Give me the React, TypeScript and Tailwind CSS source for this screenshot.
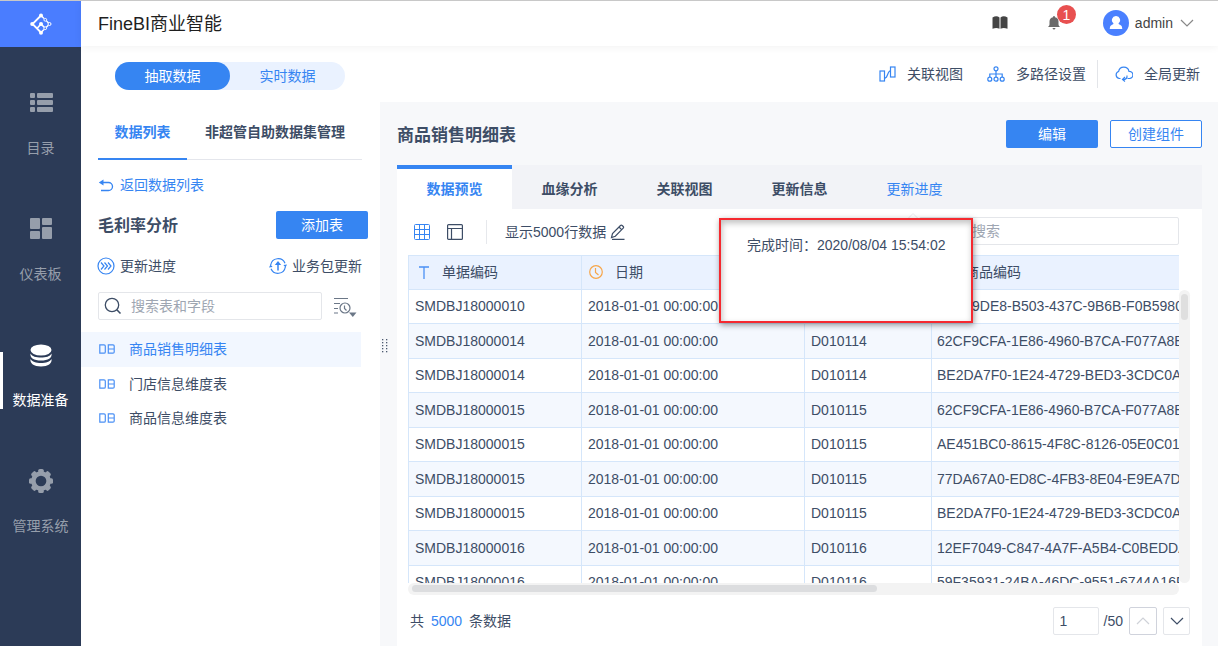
import React from 'react';

const rows: [string, string, string, string][] = [
  ['SMDBJ18000010', '2018-01-01 00:00:00', 'D010110', 'AE3F9DE8-B503-437C-9B6B-F0B5980A'],
  ['SMDBJ18000014', '2018-01-01 00:00:00', 'D010114', '62CF9CFA-1E86-4960-B7CA-F077A8B1'],
  ['SMDBJ18000014', '2018-01-01 00:00:00', 'D010114', 'BE2DA7F0-1E24-4729-BED3-3CDC0A2F'],
  ['SMDBJ18000015', '2018-01-01 00:00:00', 'D010115', '62CF9CFA-1E86-4960-B7CA-F077A8B1'],
  ['SMDBJ18000015', '2018-01-01 00:00:00', 'D010115', 'AE451BC0-8615-4F8C-8126-05E0C01D'],
  ['SMDBJ18000015', '2018-01-01 00:00:00', 'D010115', '77DA67A0-ED8C-4FB3-8E04-E9EA7DB1'],
  ['SMDBJ18000015', '2018-01-01 00:00:00', 'D010115', 'BE2DA7F0-1E24-4729-BED3-3CDC0A2F'],
  ['SMDBJ18000016', '2018-01-01 00:00:00', 'D010116', '12EF7049-C847-4A7F-A5B4-C0BEDDA1'],
  ['SMDBJ18000016', '2018-01-01 00:00:00', 'D010116', '59F35931-24BA-46DC-9551-6744A16F'],
];

type IconProps = { className?: string };

const Logo = () => (
  <svg width="22" height="22" viewBox="0 0 22 22" fill="none" stroke="#fff" strokeWidth="1.4">
    <path d="M11 2.5 2.5 11 11 19.5" strokeWidth="1.800" />
    <path d="M11 2.500 14 5.500M16.500 8 18.500 10M18.300 12.200 16.300 14.200M14 16.400 11 19.500" />
    <path d="M7 15.500 11 11l3.200 3.200" strokeWidth="1.600" />
    <circle cx="11" cy="2.500" r="2" fill="#fff" stroke="none" />
    <circle cx="2.200" cy="11" r="2" fill="#fff" stroke="none" />
    <circle cx="11" cy="19.800" r="2" fill="#fff" stroke="none" />
    <circle cx="11" cy="11" r="2" fill="#fff" stroke="none" />
    <circle cx="15.300" cy="6.800" r="1.400" strokeWidth="1" />
    <circle cx="19.500" cy="11" r="1.500" strokeWidth="1" />
    <circle cx="15.200" cy="15.200" r="1.400" strokeWidth="1" />
  </svg>
);

const ListIcon = () => (
  <svg width="24" height="24" viewBox="0 0 24 24" fill="currentColor">
    <rect x="1" y="2" width="5" height="5" rx="1" /><rect x="8" y="2" width="16" height="5" rx="1" />
    <rect x="1" y="9" width="5" height="5" rx="1" /><rect x="8" y="9" width="16" height="5" rx="1" />
    <rect x="1" y="16" width="5" height="5" rx="1" /><rect x="8" y="16" width="16" height="5" rx="1" />
  </svg>
);
const BoardIcon = () => (
  <svg width="24" height="24" viewBox="0 0 24 24" fill="currentColor">
    <rect x="1" y="1" width="10" height="11" rx="1" /><rect x="13" y="1" width="10" height="7" rx="1" />
    <rect x="1" y="14" width="10" height="8" rx="1" /><rect x="13" y="10" width="10" height="12" rx="1" />
  </svg>
);
const StackIcon = () => (
  <svg width="24" height="24" viewBox="0 0 24 24" fill="currentColor">
    <ellipse cx="12" cy="7" rx="10.500" ry="5.500" />
    <path d="M1.500 10.500c1.500 3 5.500 4 10.500 4s9-1 10.500-4c.8 4.500-3.500 7-10.500 7s-11.300-2.500-10.500-7z" />
    <path d="M1.500 16c1.500 2.800 5.500 4 10.500 4s9-1.200 10.500-4c.8 4.500-3.500 7.500-10.500 7.500S.7 20.500 1.500 16z" />
  </svg>
);
const GearIcon = () => (
  <svg width="24" height="24" viewBox="0 0 24 24">
    <circle cx="12" cy="12" r="7.600" fill="none" stroke="currentColor" strokeWidth="4.500" />
    <g fill="currentColor">
      {[0, 45, 90, 135, 180, 225, 270, 315].map((a) => (
        <rect key={a} x="9.200" y="0" width="5.600" height="5" rx="1.600" transform={`rotate(${a} 12 12)`} />
      ))}
    </g>
  </svg>
);
const BackIcon = () => (
  <svg width="16" height="14" viewBox="0 0 16 14" fill="none" stroke="currentColor" strokeWidth="1.300">
    <path d="M3 4.500h7.500a3.800 3.800 0 0 1 0 8H3" />
    <path d="M.8 4.500 5.500 1.500v6z" fill="currentColor" stroke="none" />
  </svg>
);
const ProgressIcon = () => (
  <svg width="18" height="18" viewBox="0 0 18 18" fill="none" stroke="currentColor" strokeWidth="1.200">
    <circle cx="9" cy="9" r="8" />
    <path d="m4 5.500 3 3.500-3 3.500M7.500 5.500l3 3.500-3 3.500M11 5.500 14 9l-3 3.500" />
  </svg>
);
const PackIcon = () => (
  <svg width="18" height="18" viewBox="0 0 18 18" fill="none" stroke="currentColor" strokeWidth="1.200">
    <path d="M1.700 8a7.500 7.500 0 0 1 14.300-1.800M16.300 10A7.500 7.500 0 0 1 2 11.800" />
    <path d="M9 13.500V6" strokeWidth="1.500" />
    <path d="M9 4 5.800 8h6.400zM0 10.500l3.600-.5L1.500 7.500zM18 7.500l-3.600.5 2.100 2.500z" fill="currentColor" stroke="none" />
  </svg>
);
const SearchIcon = () => (
  <svg width="18" height="18" viewBox="0 0 18 18" fill="none" stroke="currentColor" strokeWidth="1.300">
    <circle cx="8" cy="8" r="6.700" /><path d="m12.800 12.800 3.700 3.700" strokeWidth="1.600" />
  </svg>
);
const SortIcon = () => (
  <svg width="24" height="20" viewBox="0 0 24 20" fill="none" stroke="currentColor" strokeWidth="1.200">
    <path d="M0 1.500h14M0 6.500h6M0 11.500h4M0 16h4" />
    <circle cx="11" cy="11" r="5" /><path d="M10.500 8.500v3l2 2" />
    <path d="M15 15.500h7.500L18.800 20z" fill="currentColor" stroke="none" />
  </svg>
);
const DbIcon = () => (
  <svg width="16" height="10" viewBox="0 0 16 10" fill="none" stroke="#4a90f5" strokeWidth="1.200">
    <path d="M.8.800h4.200q1.300 0 1.300 1.300v5.800q0 1.300-1.300 1.300H.8zM9.300.800h4.700q1.200 0 1.200 1.200v6q0 1.200-1.200 1.200H9.300zM9.300 5h5.700" />
  </svg>
);
const BookIcon = () => (
  <svg width="16" height="14" viewBox="0 0 16 14" fill="#444">
    <path d="M.5 1.500Q4.500-.8 7.500 1.500v11.300q-3-1.800-7 0zM8.500 1.500q3-2.300 7 0v11.300q-4-1.800-7 0z" />
  </svg>
);
const BellIcon = () => (
  <svg width="12" height="14" viewBox="0 0 12 14" fill="#6a6a6a">
    <path d="M6 0q1 0 1 1.200Q10.500 2 10.500 5.500V8.500q0 1.300 1.500 2.500H0q1.500-1.200 1.500-2.500V5.500Q1.500 2 5 1.200 5 0 6 0zM4.500 12h3q-.3 1.500-1.500 1.500T4.500 12z" />
  </svg>
);
const Avatar = () => (
  <svg width="26" height="26" viewBox="0 0 26 26">
    <circle cx="13" cy="13" r="13" fill="#4a80ff" />
    <path d="M13 6a4 4 0 0 1 2.500 7.200q0 1 1.500 1.500 2.200.8 2.200 3.300v1H6.800v-1q0-2.500 2.200-3.300 1.500-.5 1.500-1.500A4 4 0 0 1 13 6z" fill="#fff" />
  </svg>
);
const Chevron = ({ className = '', up = false }: IconProps & { up?: boolean }) => (
  <svg width="14" height="8" viewBox="0 0 14 8" fill="none" stroke="currentColor" strokeWidth="1.200" className={className}>
    <path d={up ? 'M1 7l6-6 6 6' : 'M1 1l6 6 6-6'} />
  </svg>
);
const LinkIcon = () => (
  <svg width="17" height="16" viewBox="0 0 17 16" fill="none" stroke="currentColor" strokeWidth="1.200">
    <rect x="1" y="5" width="4.500" height="10" /><rect x="11.500" y="1" width="4.500" height="10" />
    <path d="M5.500 12.500 7.500 11l2.200-5 1.800-1.500" />
  </svg>
);
const TreeIcon = () => (
  <svg width="18" height="16" viewBox="0 0 18 16" fill="none" stroke="currentColor" strokeWidth="1.200">
    <circle cx="9" cy="2.800" r="2" /><circle cx="2.800" cy="13.200" r="2" /><circle cx="9" cy="13.200" r="2" /><circle cx="15.200" cy="13.200" r="2" />
    <path d="M9 5v6M2.800 11V8h12.400v3" />
  </svg>
);
const CloudIcon = () => (
  <svg width="18" height="16" viewBox="0 0 18 16" fill="none" stroke="currentColor" strokeWidth="1.200">
    <path d="M5.500 12.500H4.500A3.600 3.600 0 0 1 3.600 5.500 5.300 5.300 0 0 1 14 5.300a3.600 3.600 0 0 1 .5 7.200h-2" />
    <path d="M12 9.500q.5 4-4 4" /><path d="M10 11 7.500 13.500 10 15.500" />
  </svg>
);
const GridIcon = () => (
  <svg width="16" height="16" viewBox="0 0 16 16" fill="none" stroke="#3685f2" strokeWidth="1">
    <rect x=".5" y=".5" width="15" height="15" rx="1" /><path d="M5.500.500v15M10.500.500v15M.5 5.500h15M.5 10.500h15" />
  </svg>
);
const LayoutIcon = () => (
  <svg width="16" height="16" viewBox="0 0 16 16" fill="none" stroke="#3d4d66" strokeWidth="1.200">
    <rect x=".6" y=".6" width="14.800" height="14.800" rx="1" /><path d="M.5 4.500h15M4.500 4.500v11" />
  </svg>
);
const PencilIcon = () => (
  <svg width="16" height="16" viewBox="0 0 16 16" fill="none" stroke="currentColor" strokeWidth="1.200">
    <path d="M1.500 13.500 2.500 9.500 10.500 1.500q.8-.8 1.700 0l1 1q.8.8 0 1.600L5.300 12.200zM9 3l2.800 2.800M2 15.400h12.500" />
  </svg>
);
const ClockIcon = () => (
  <svg width="14" height="14" viewBox="0 0 14 14" fill="none" stroke="#f7a64a" strokeWidth="1.200">
    <circle cx="7" cy="7" r="6.300" /><path d="M6.500 3v4.500L9.500 10" />
  </svg>
);
const TextIcon = () => (
  <svg width="12" height="13" viewBox="0 0 12 13" fill="none" stroke="#4a90f5" strokeWidth="1.300">
    <path d="M1 1h10M6 1v12" />
  </svg>
);

const navItems = [
  { label: '目录', icon: <ListIcon />, active: false },
  { label: '仪表板', icon: <BoardIcon />, active: false },
  { label: '数据准备', icon: <StackIcon />, active: true },
  { label: '管理系统', icon: <GearIcon />, active: false },
];

const Sidebar = () => (
  <aside className="flex w-[81px] shrink-0 flex-col bg-[#2c3b57]">
    <a href="#home" aria-label="FineBI" className="flex h-[46px] items-center justify-center bg-[#4a7dff]"><Logo /></a>
    <nav className="flex flex-col gap-[59px] pt-11">
      {navItems.map((n) => (
        <a
          key={n.label}
          href={`#${n.label}`}
          className={`relative flex flex-col items-center gap-[23px] leading-5 ${n.active ? 'text-white' : 'text-[#969eab]'}`}
        >
          {n.active && <span className="absolute left-0 top-[9px] h-[57px] w-[3px] bg-white" />}
          {n.icon}
          <span className="whitespace-nowrap">{n.label}</span>
        </a>
      ))}
    </nav>
  </aside>
);

const Header = () => (
  <header className="relative z-10 flex h-[46px] items-center bg-white pl-[17px] pr-6 shadow-[0_1px_8px_rgba(0,0,0,0.06)]">
    <h1 className="grow pt-px text-lg text-[#1f1f1f]">FineBI商业智能</h1>
    <button aria-label="帮助"><BookIcon /></button>
    <button aria-label="消息" className="relative ml-10">
      <BellIcon />
      <span className="absolute -top-[11px] left-[9px] flex size-[19px] items-center justify-center rounded-full bg-[#e85050] text-sm text-white">1</span>
    </button>
    <button className="ml-[43px] flex items-center gap-[6px] text-[#444]">
      <Avatar />admin<Chevron className="ml-px text-[#888]" />
    </button>
  </header>
);

const Toolbar = () => (
  <div className="flex h-14 shrink-0 items-center pl-[34px] pr-[18px]">
    <div className="mt-1 flex h-7 w-[230px] rounded-full bg-[#eaf2ff]">
      <button className="flex-1 rounded-full bg-[#3685f2] text-white">抽取数据</button>
      <button className="flex-1 text-[#3685f2]">实时数据</button>
    </div>
    <div className="grow" />
    <button className="flex items-center gap-[11px]"><span className="text-[#3685f2]"><LinkIcon /></span>关联视图</button>
    <button className="ml-6 flex items-center gap-[11px]"><span className="text-[#3685f2]"><TreeIcon /></span>多路径设置</button>
    <div className="ml-[11px] h-7 w-px bg-[#e3e5e9]" />
    <button className="ml-[17px] flex items-center gap-[11px]"><span className="text-[#3685f2]"><CloudIcon /></span>全局更新</button>
  </div>
);

const TableList = () => (
  <section className="flex w-[299px] shrink-0 flex-col">
    <div className="ml-[17px] mr-[18px] flex h-[58px] border-b border-[#e4e6ec] font-bold">
      <button className="-mb-px w-[89px] border-b-2 border-[#3685f2] pt-1 text-[#3685f2]">数据列表</button>
      <button className="ml-[18px] pt-[3px]">非超管自助数据集管理</button>
    </div>
    <a href="#back" className="ml-[17px] mt-[15px] flex h-5 items-center gap-[6px] text-[#3685f2]"><BackIcon />返回数据列表</a>
    <div className="ml-[17px] mr-3 mt-4 flex h-7 items-center justify-between">
      <h2 className="pt-[3px] text-base font-bold">毛利率分析</h2>
      <button className="h-7 w-[92px] rounded-xs bg-[#3685f2] text-white">添加表</button>
    </div>
    <div className="ml-4 mr-[18px] mt-[17px] flex h-5 items-center justify-between">
      <button className="flex items-center gap-[5px]"><span className="text-[#3685f2]"><ProgressIcon /></span>更新进度</button>
      <button className="flex items-center gap-[5px]"><span className="text-[#3685f2]"><PackIcon /></span>业务包更新</button>
    </div>
    <div className="ml-[17px] mr-[22px] mt-4 flex h-7 items-center gap-3">
      <label className="flex h-7 w-56 items-center gap-[9px] rounded-xs border border-[#e4e6ea] pl-[5px]">
        <SearchIcon />
        <input aria-label="搜索表和字段" placeholder="搜索表和字段" className="min-w-0 grow outline-none placeholder:text-[#9ea6b2]" />
      </label>
      <button aria-label="排序" className="mt-[2px] text-[#6b7787]"><SortIcon /></button>
    </div>
    <ul className="mr-[19px] mt-3">
      {['商品销售明细表', '门店信息维度表', '商品信息维度表'].map((t, i) => (
        <li key={t}>
          <a href={`#${t}`} className={`flex items-center gap-[14px] pl-[18px] ${i === 0 ? 'h-[35px] bg-[#f2f7ff] text-[#3685f2]' : 'h-[34px]'}`}>
            <DbIcon />{t}
          </a>
        </li>
      ))}
    </ul>
  </section>
);

const Splitter = () => (
  <svg width="6" height="14" viewBox="0 0 6 14" fill="#4d5a70">
    {[0, 3, 6, 9, 12].map((y) => (
      <g key={y}><rect x="0" y={y} width="1.300" height="1.300" /><rect x="4" y={y} width="1.300" height="1.300" /></g>
    ))}
  </svg>
);

const Popover = () => (
  <>
    <svg width="10" height="6" viewBox="0 0 10 6" className="absolute right-[284px] top-12 z-10" fill="#fff" stroke="#e8eaee">
      <path d="M0 5.500 5 .5l5 5" />
    </svg>
    <div className="absolute right-[229px] top-[53px] z-20 h-[105px] w-[254px] border-2 border-[#f5292f] bg-white pl-[26px] pt-[15px] leading-5 shadow-[1px_2px_6px_rgba(0,0,0,0.4),inset_1px_3px_6px_rgba(0,0,0,0.25)]">
      完成时间：2020/08/04 15:54:02
    </div>
  </>
);

const th = 'h-[34px] overflow-hidden whitespace-nowrap border-r border-[#d5e6fa] text-left font-normal';
const td = 'overflow-hidden whitespace-nowrap border-r border-b border-[#d5e6fa] py-0 pl-[6px]';

const DataTable = () => (
  <div className="ml-[11px] mr-3 flex min-h-0 grow flex-col">
    <div className="flex min-h-0 grow">
      <div className="min-w-0 grow overflow-hidden">
        <table className="w-full table-fixed border-separate border-spacing-0 border-l border-t border-[#d5e6fa]">
          <colgroup><col className="w-[173px]" /><col className="w-[223px]" /><col className="w-[127px]" /><col /></colgroup>
          <thead className="bg-[#eaf2ff]">
            <tr>
              <th className={`${th} border-b`}><span className="flex items-center gap-3 pl-[9px]"><TextIcon />单据编码</span></th>
              <th className={`${th} border-b`}><span className="flex items-center gap-3 pl-[7px]"><ClockIcon />日期</span></th>
              <th className={`${th} border-b`}><span className="flex items-center gap-3 pl-[9px]"><TextIcon />门店编码</span></th>
              <th className="border-b border-[#d5e6fa] text-left font-normal"><span className="flex items-center gap-3 pl-[9px]"><TextIcon />商品编码</span></th>
            </tr>
          </thead>
          <tbody>
            {rows.map((r, i) => (
              <tr key={i} className="h-[34px] even:h-[35px] even:bg-[#f4f8fe]">
                <td className={td}>{r[0]}</td>
                <td className={td}>{r[1]}</td>
                <td className={td}>{r[2]}</td>
                <td className="overflow-hidden whitespace-nowrap border-b border-[#d5e6fa] py-0 pl-[5px]">{r[3]}</td>
              </tr>
            ))}
          </tbody>
        </table>
      </div>
      <div className="mt-[35px] w-[11px] shrink-0 rounded-md bg-[#f3f3f3] px-[2px] pt-1"><div className="h-[26px] rounded bg-[#dfdfdf]" /></div>
    </div>
    <div className="mr-[11px] h-3 shrink-0 rounded-md bg-[#f3f3f3] px-1 py-[2px]"><div className="h-[7px] w-[61%] rounded bg-[#dcdddf]" /></div>
  </div>
);

const Detail = () => (
  <main className="flex min-w-0 grow bg-[#f7f8fa]">
    <div className="flex w-[17px] shrink-0 items-center pb-[55px] pl-[2px]"><Splitter /></div>
    <div className="mr-4 flex min-w-0 grow flex-col">
      <div className="flex h-[63px] shrink-0 items-center gap-3 pt-px">
        <h2 className="grow pt-1 text-[17px] font-bold">商品销售明细表</h2>
        <button className="h-7 w-[92px] rounded-xs bg-[#3685f2] text-white">编辑</button>
        <button className="h-7 w-[92px] rounded-xs border border-[#3685f2] bg-white text-[#3685f2]">创建组件</button>
      </div>
      <div className="relative flex min-h-0 grow flex-col bg-white">
        <div className="flex h-11 shrink-0 bg-[#f2f3f7] font-bold">
          <button className="w-[115px] border-t-4 border-[#3685f2] bg-white pt-px text-[#3685f2]">数据预览</button>
          <button className="w-[115px] pt-[5px]">血缘分析</button>
          <button className="w-[115px] pt-[5px]">关联视图</button>
          <button className="w-[115px] pt-[5px]">更新信息</button>
          <button className="w-[115px] pt-1 font-normal text-[#3685f2]">更新进度</button>
        </div>
        <Popover />
        <div className="flex h-[46px] shrink-0 items-center pl-[17px] pr-[23px]">
          <button aria-label="表格"><GridIcon /></button>
          <button aria-label="布局" className="ml-[17px]"><LayoutIcon /></button>
          <div className="ml-[23px] h-6 w-px bg-[#e6e8ec]" />
          <span className="ml-[18px]">显示5000行数据</span>
          <button aria-label="修改行数" className="ml-1"><PencilIcon /></button>
          <div className="grow" />
          <label className="mb-px flex h-7 w-[260px] items-center rounded-xs border border-[#e4e6ea] pl-[52px]">
            <input aria-label="搜索" placeholder="搜索" className="min-w-0 grow outline-none placeholder:text-[#9ea6b2]" />
          </label>
        </div>
        <DataTable />
        <footer className="flex h-[51px] shrink-0 items-center pl-[13px] pr-3">
          <span className="grow">共 <span className="mx-[3px] text-[#3685f2]">5000</span> 条数据</span>
          <input aria-label="页码" defaultValue="1" className="h-7 w-[46px] rounded-xs border border-[#e4e6ea] pl-[6px] outline-none" />
          <span className="ml-[5px]">/50</span>
          <button aria-label="上一页" className="ml-[6px] flex size-7 items-center justify-center rounded-xs border border-[#d0d3dc] text-[#cfd2d8]"><Chevron up /></button>
          <button aria-label="下一页" className="ml-[6px] flex h-7 w-[27px] items-center justify-center rounded-xs border border-[#e4e6ea] text-[#3d4d66]"><Chevron /></button>
        </footer>
      </div>
    </div>
  </main>
);

export default function App() {
  return (
    <div className="flex h-screen flex-col overflow-hidden border-t border-[#c8c8c8] bg-white font-['Liberation_Sans','Noto_Sans_CJK_SC',sans-serif] text-sm text-[#3d4d66]">
      <div className="flex min-h-0 grow">
        <Sidebar />
        <div className="flex min-w-0 grow flex-col">
          <Header />
          <Toolbar />
          <div className="flex min-h-0 grow">
            <TableList />
            <Detail />
          </div>
        </div>
      </div>
    </div>
  );
}
